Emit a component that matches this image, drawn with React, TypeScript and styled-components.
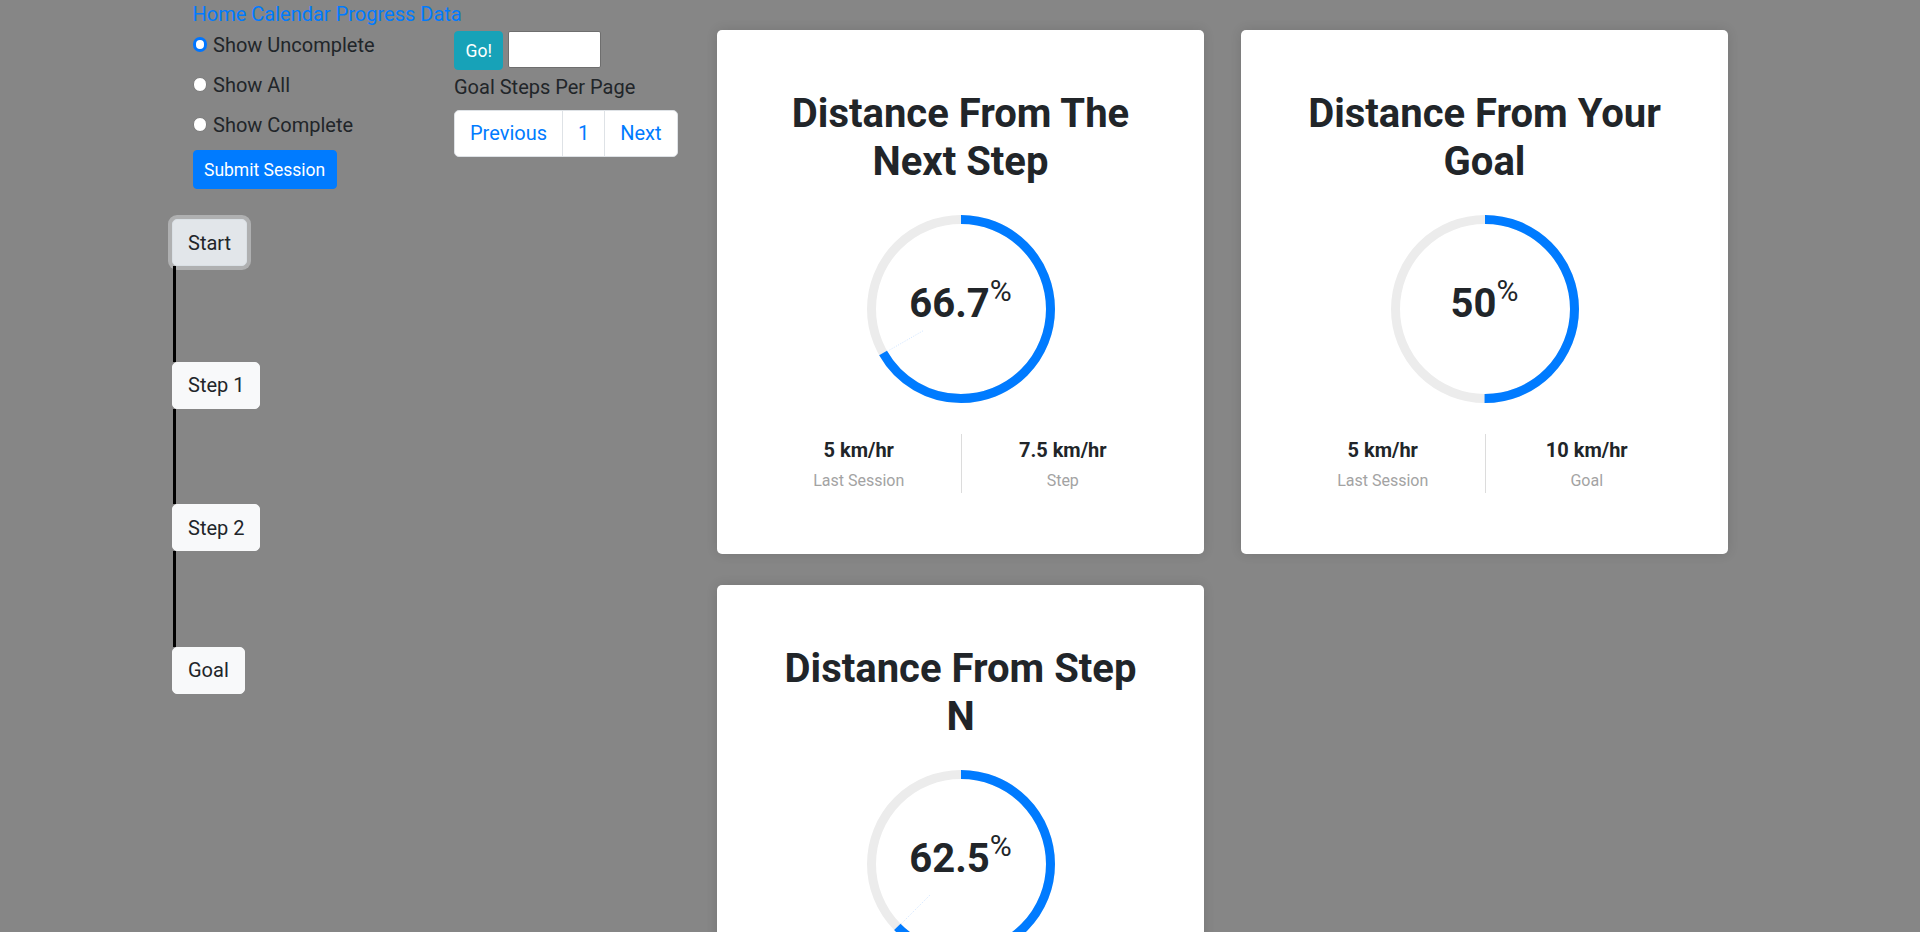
import React from "react";
import styled, { createGlobalStyle } from "styled-components";

const GlobalStyle = createGlobalStyle`
  * { box-sizing: border-box; }
  html, body {
    margin: 0;
    padding: 0;
    background: #868686;
    overflow: hidden;
  }
  body {
    font-family: Roboto, "Liberation Sans", Arial, sans-serif;
    font-size: 20px;
    line-height: 1.5;
    color: #212529;
  }
`;

const Page = styled.div`
  width: 1920px;
  height: 932px;
  padding-left: 172px;
  overflow: hidden;
`;

const Nav = styled.nav`
  height: 29.5px;
  padding-left: 20.5px;
  white-space: nowrap;
  line-height: 29.5px;
`;

const NavLink = styled.a`
  color: #007bff;
  text-decoration: none;
  cursor: pointer;
`;

const Main = styled.div`
  display: flex;
  align-items: flex-start;
`;

const Sidebar = styled.div`
  width: 282px;
  flex: none;
  display: flex;
  flex-direction: column;
  align-items: flex-start;
`;

const Controls = styled.div`
  padding-left: 20.5px;
  display: flex;
  flex-direction: column;
  align-items: flex-start;
`;

const RadioList = styled.div`
  display: flex;
  flex-direction: column;
  gap: 10px;
`;

const RadioRow = styled.label`
  height: 30px;
  display: flex;
  align-items: center;
  gap: 6px;
  line-height: 30px;
  white-space: nowrap;
`;

const Radio = styled.input`
  appearance: none;
  -webkit-appearance: none;
  width: 14.5px;
  height: 14.5px;
  margin: 0;
  flex: none;
  border-radius: 50%;
  background: #fff;
  border: 1px solid #7a7a7a;
  &:checked {
    border: 3.5px solid #0075ff;
  }
`;

const Button = styled.button<{ $bg: string }>`
  height: 39px;
  padding: 0 10.5px;
  border: 1px solid ${(p) => p.$bg};
  border-radius: 4px;
  background: ${(p) => p.$bg};
  color: #fff;
  font-family: inherit;
  font-size: 17.5px;
  line-height: 26px;
  cursor: pointer;
`;

const SubmitButton = styled(Button)`
  margin-top: 10.5px;
`;

const Timeline = styled.div`
  margin-top: 30px;
  display: flex;
  flex-direction: column;
  align-items: flex-start;
`;

const StepButton = styled.button<{ $active?: boolean }>`
  height: 47px;
  padding: 0 15px;
  border: 1px solid ${(p) => (p.$active ? "#dae0e5" : "#f8f9fa")};
  border-radius: 5px;
  background: ${(p) => (p.$active ? "#e2e6ea" : "#f8f9fa")};
  box-shadow: ${(p) => (p.$active ? "0 0 0 4px rgba(216, 217, 219, 0.5)" : "none")};
  color: #212529;
  font-family: inherit;
  font-size: 20px;
  line-height: 30px;
  cursor: pointer;
`;

const Connector = styled.div`
  width: 3px;
  height: 95.5px;
  margin-left: 0.7px;
  background: #000;
`;

const Pager = styled.div`
  width: 263px;
  flex: none;
  padding-top: 1.5px;
  display: flex;
  flex-direction: column;
  align-items: flex-start;
`;

const GoRow = styled.div`
  display: flex;
  align-items: flex-start;
  gap: 5px;
`;

const CountInput = styled.input`
  width: 93px;
  height: 37px;
  margin: 0;
  border: 1px solid #6e6e6e;
  border-radius: 2px;
  background: #fff;
  font-family: inherit;
  font-size: 16px;
`;

const PagerLabel = styled.div`
  margin-top: 1.5px;
  line-height: 30px;
  white-space: nowrap;
`;

const Pagination = styled.ul`
  margin: 8.5px 0 0;
  padding: 0;
  list-style: none;
  display: flex;
`;

const PageLink = styled.li`
  height: 47px;
  padding: 0 15px;
  margin-left: -1px;
  display: flex;
  align-items: center;
  border: 1px solid #dee2e6;
  background: #fff;
  color: #007bff;
  line-height: 25px;
  cursor: pointer;
  &:first-child {
    margin-left: 0;
    border-radius: 5px 0 0 5px;
  }
  &:last-child {
    border-radius: 0 5px 5px 0;
  }
`;

const Cards = styled.div`
  display: grid;
  grid-template-columns: 487px 487px;
  column-gap: 37px;
  row-gap: 31px;
`;

const Card = styled.section`
  height: 524px;
  padding: 60px 40px 60px;
  background: #fff;
  border-radius: 5px;
  box-shadow: 0 0 12px rgba(0, 0, 0, 0.12);
  display: flex;
  flex-direction: column;
  align-items: center;
`;

const CardTitle = styled.h2`
  margin: 0;
  padding: 0 15px;
  font-size: 40px;
  font-weight: 700;
  line-height: 48px;
  text-align: center;
  color: #212529;
`;

const DonutWrap = styled.div`
  margin-top: 29.7px;
  width: 188px;
  height: 188px;
  flex: none;
  display: grid;
  place-items: center;
  & > * {
    grid-area: 1 / 1;
  }
`;

const Percent = styled.div`
  display: flex;
  align-items: flex-start;
  margin-bottom: 9.8px;
`;

const PercentValue = styled.span`
  font-size: 40px;
  font-weight: 700;
  line-height: 1;
`;

const PercentSign = styled.span`
  margin-top: -8px;
  font-size: 30px;
  font-weight: 400;
  line-height: 1;
`;

const Stats = styled.div`
  margin-top: 31px;
  width: 100%;
  height: 59.3px;
  flex: none;
  display: grid;
  grid-template-columns: 1fr 1fr;
`;

const StatCol = styled.div<{ $divider?: boolean }>`
  display: flex;
  flex-direction: column;
  align-items: center;
  justify-content: center;
  border-left: ${(p) => (p.$divider ? "1px solid #dcdcdc" : "none")};
`;

const StatValue = styled.div`
  font-size: 20px;
  font-weight: 700;
  line-height: 30px;
`;

const StatLabel = styled.div`
  margin-top: 3.4px;
  font-size: 16px;
  line-height: 24px;
  color: #a3a3a3;
`;

const SIZE = 188;
const STROKE = 9;
const R = (SIZE - STROKE) / 2;
const C = 2 * Math.PI * R;

function Donut({ value, label, trace }: { value: number; label: string; trace?: boolean }) {
  const angle = (value / 100) * 2 * Math.PI;
  const dx = Math.sin(angle);
  const dy = -Math.cos(angle);
  const cx = SIZE / 2;
  return (
    <DonutWrap>
      <svg width={SIZE} height={SIZE} viewBox={`0 0 ${SIZE} ${SIZE}`}>
        <circle cx={cx} cy={cx} r={R} fill="none" stroke="#ececec" strokeWidth={STROKE} />
        <circle
          cx={cx}
          cy={cx}
          r={R}
          fill="none"
          stroke="#007bff"
          strokeWidth={STROKE}
          strokeDasharray={`${(value / 100) * C} ${C}`}
          transform={`rotate(-90 ${cx} ${cx})`}
        />
        {trace && (
          <line
            x1={cx + dx * 44}
            y1={cx + dy * 44}
            x2={cx + dx * (R - 4)}
            y2={cx + dy * (R - 4)}
            stroke="#8fc1ff"
            strokeWidth={0.7}
            strokeDasharray="1 1.5"
            opacity={0.6}
          />
        )}
      </svg>
      <Percent>
        <PercentValue>{label}</PercentValue>
        <PercentSign>%</PercentSign>
      </Percent>
    </DonutWrap>
  );
}

type CardData = {
  title: string;
  value: number;
  label: string;
  trace?: boolean;
  left: [string, string];
  right: [string, string];
};

const cards: CardData[] = [
  {
    title: "Distance From The Next Step",
    value: 66.7,
    label: "66.7",
    trace: true,
    left: ["5 km/hr", "Last Session"],
    right: ["7.5 km/hr", "Step"],
  },
  {
    title: "Distance From Your Goal",
    value: 50,
    label: "50",
    left: ["5 km/hr", "Last Session"],
    right: ["10 km/hr", "Goal"],
  },
  {
    title: "Distance From Step N",
    value: 62.5,
    label: "62.5",
    trace: true,
    left: ["5 km/hr", "Last Session"],
    right: ["8 km/hr", "Step N"],
  },
];

const steps = ["Start", "Step 1", "Step 2", "Goal"];

export default function App() {
  return (
    <>
      <GlobalStyle />
      <Page>
        <Nav>
          <NavLink>Home</NavLink> <NavLink>Calendar</NavLink> <NavLink>Progress</NavLink>{" "}
          <NavLink>Data</NavLink>
        </Nav>
        <Main>
          <Sidebar>
            <Controls>
              <RadioList>
                <RadioRow>
                  <Radio type="radio" name="filter" defaultChecked />
                  Show Uncomplete
                </RadioRow>
                <RadioRow>
                  <Radio type="radio" name="filter" />
                  Show All
                </RadioRow>
                <RadioRow>
                  <Radio type="radio" name="filter" />
                  Show Complete
                </RadioRow>
              </RadioList>
              <SubmitButton $bg="#007bff">Submit Session</SubmitButton>
            </Controls>
            <Timeline>
              {steps.map((s, i) => (
                <React.Fragment key={s}>
                  {i > 0 && <Connector />}
                  <StepButton $active={i === 0}>{s}</StepButton>
                </React.Fragment>
              ))}
            </Timeline>
          </Sidebar>
          <Pager>
            <GoRow>
              <Button $bg="#17a2b8">Go!</Button>
              <CountInput type="text" />
            </GoRow>
            <PagerLabel>Goal Steps Per Page</PagerLabel>
            <Pagination>
              <PageLink>Previous</PageLink>
              <PageLink>1</PageLink>
              <PageLink>Next</PageLink>
            </Pagination>
          </Pager>
          <Cards>
            {cards.map((c) => (
              <Card key={c.title}>
                <CardTitle>{c.title}</CardTitle>
                <Donut value={c.value} label={c.label} trace={c.trace} />
                <Stats>
                  <StatCol>
                    <StatValue>{c.left[0]}</StatValue>
                    <StatLabel>{c.left[1]}</StatLabel>
                  </StatCol>
                  <StatCol $divider>
                    <StatValue>{c.right[0]}</StatValue>
                    <StatLabel>{c.right[1]}</StatLabel>
                  </StatCol>
                </Stats>
              </Card>
            ))}
          </Cards>
        </Main>
      </Page>
    </>
  );
}
